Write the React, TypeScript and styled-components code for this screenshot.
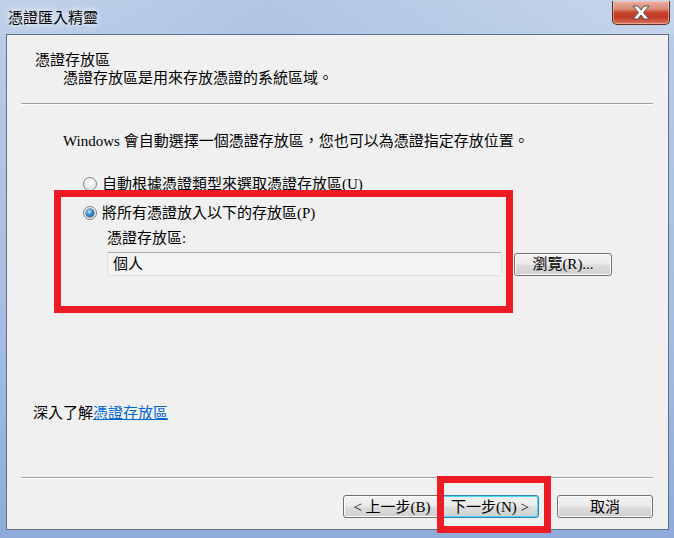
import React from "react";
import styled, { createGlobalStyle } from "styled-components";

const GlobalStyle = createGlobalStyle`
  html, body {
    margin: 0;
    padding: 0;
  }
  body {
    width: 674px;
    height: 538px;
    overflow: hidden;
    font-family: "Liberation Serif", "Noto Sans CJK TC", serif;
    font-size: 15px;
    color: #000;
  }
`;

const Window = styled.div`
  position: relative;
  width: 674px;
  height: 538px;
  display: flex;
  flex-direction: column;
  background: linear-gradient(180deg, #bccfe8 0%, #b2c7e4 20%, #a5bde0 60%, #8fabd9 100%);
`;

const TitleBar = styled.div`
  height: 34px;
  display: flex;
  align-items: flex-start;
  justify-content: space-between;
  background: linear-gradient(90deg, rgba(255, 255, 255, 0.05), rgba(120, 150, 200, 0.15) 40%, rgba(255, 255, 255, 0.15));
`;

const Title = styled.div`
  margin: 9px 0 0 8px;
  line-height: 18px;
  text-shadow: 0 0 6px rgba(255, 255, 255, 0.9), 0 0 10px rgba(255, 255, 255, 0.7);
`;

const CloseButton = styled.div`
  margin: 1px 4px 0 0;
  width: 58px;
  height: 24px;
  box-sizing: border-box;
  border: 1px solid #5e2a22;
  border-top: none;
  border-radius: 0 0 5px 5px;
  display: flex;
  align-items: center;
  justify-content: center;
  background: linear-gradient(180deg, #e9b2a3 0%, #d98a76 35%, #c8452d 50%, #c13a22 70%, #d9735c 100%);
  box-shadow: inset 0 0 0 1px rgba(255, 220, 210, 0.5);
`;

const Client = styled.div`
  flex: 1;
  margin: 0 5px 8px 6px;
  border: 1px solid #5f6e86;
  background: #f0f0f0;
  display: flex;
  flex-direction: column;
`;

const Header = styled.div`
  padding: 16px 0 0 28px;
`;

const HeaderTitle = styled.div`
  line-height: 18px;
`;

const HeaderSub = styled.div`
  line-height: 18px;
  margin-left: 28px;
`;

const Separator = styled.div<{ $top?: number }>`
  margin: ${(p) => p.$top ?? 0}px 15px 0 14px;
  border-top: 1px solid #a0a0a0;
  border-bottom: 1px solid #ffffff;
`;

const Body = styled.div`
  flex: 1;
  padding: 27px 0 0 56px;
  display: flex;
  flex-direction: column;
`;

const Line = styled.div<{ $top?: number; $indent?: number }>`
  line-height: 18px;
  margin-top: ${(p) => p.$top ?? 0}px;
  margin-left: ${(p) => p.$indent ?? 0}px;
`;

const RadioRow = styled.label<{ $top: number }>`
  display: flex;
  align-items: center;
  gap: 5px;
  margin: ${(p) => p.$top}px 0 0 20px;
  line-height: 18px;
`;

const RadioDot = styled.span<{ $checked?: boolean }>`
  position: relative;
  width: 14px;
  height: 14px;
  box-sizing: border-box;
  border-radius: 50%;
  border: 1px solid #7d8084;
  background: radial-gradient(circle at 50% 40%, #ffffff 0%, #ececec 45%, #c9cacc 100%);
  box-shadow: inset 0 0 0 1px rgba(255, 255, 255, 0.6);
  flex-shrink: 0;

  &::after {
    content: "";
    display: ${(p) => (p.$checked ? "block" : "none")};
    position: absolute;
    left: 2px;
    top: 2px;
    width: 8px;
    height: 8px;
    border-radius: 50%;
    background: radial-gradient(circle at 40% 35%, #c6ebff 0%, #3e93d6 40%, #0b3f78 100%);
    box-shadow: 0 0 0 0.5px #1c3c5e;
  }
`;

const FieldRow = styled.div`
  display: flex;
  align-items: center;
  gap: 12px;
  margin: 5px 0 0 44px;
`;

const Field = styled.div`
  width: 395px;
  height: 24px;
  box-sizing: border-box;
  border: 1px solid #dde1e7;
  border-top-color: #abadb3;
  border-radius: 2px;
  background: #f3f3f3;
  padding-left: 5px;
  line-height: 22px;
`;

const Button = styled.div<{ $width: number; $default?: boolean; $height?: number }>`
  width: ${(p) => p.$width}px;
  height: ${(p) => p.$height ?? 23}px;
  box-sizing: border-box;
  border: 1px solid ${(p) => (p.$default ? "#3c7fb1" : "#707070")};
  border-radius: 3px;
  display: flex;
  align-items: center;
  justify-content: center;
  line-height: 18px;
  background: linear-gradient(180deg, #f2f2f2 0%, #ebebeb 48%, #dddddd 52%, #cfcfcf 100%);
  box-shadow: inset 0 0 0 1px ${(p) => (p.$default ? "#48d8fb" : "#fcfcfc")};
`;

const LinkLine = styled.div`
  line-height: 18px;
  padding-left: 26px;
  margin-bottom: 55px;
`;

const Link = styled.span`
  color: #0066cc;
  text-decoration: underline;
`;

const Footer = styled.div`
  display: flex;
  justify-content: flex-end;
  padding: 16px 15px 11px 0;
`;

const ButtonPair = styled.div`
  display: flex;
  margin-right: 18px;
`;

const Highlight = styled.div<{ $x: number; $y: number; $w: number; $h: number }>`
  position: absolute;
  left: ${(p) => p.$x}px;
  top: ${(p) => p.$y}px;
  width: ${(p) => p.$w}px;
  height: ${(p) => p.$h}px;
  box-sizing: border-box;
  border: 7px solid #ed1c24;
  pointer-events: none;
`;

const CloseIcon = () => (
  <svg width="20" height="15" viewBox="0 0 20 15">
    <path
      d="M2 1 H7 L10 5 L13 1 H18 L12.5 7.5 L18 14 H13 L10 10 L7 14 H2 L7.5 7.5 Z"
      fill="#ffffff"
      stroke="#5a4a48"
      strokeWidth="1"
      strokeLinejoin="round"
    />
  </svg>
);

export default function App() {
  return (
    <>
      <GlobalStyle />
      <Window>
        <TitleBar>
          <Title>憑證匯入精靈</Title>
          <CloseButton>
            <CloseIcon />
          </CloseButton>
        </TitleBar>
        <Client>
          <Header>
            <HeaderTitle>憑證存放區</HeaderTitle>
            <HeaderSub>憑證存放區是用來存放憑證的系統區域。</HeaderSub>
          </Header>
          <Separator $top={16} />
          <Body>
            <Line>Windows 會自動選擇一個憑證存放區，您也可以為憑證指定存放位置。</Line>
            <RadioRow $top={25}>
              <RadioDot />
              <span>自動根據憑證類型來選取憑證存放區(U)</span>
            </RadioRow>
            <RadioRow $top={11}>
              <RadioDot $checked />
              <span>將所有憑證放入以下的存放區(P)</span>
            </RadioRow>
            <Line $top={7} $indent={44}>
              憑證存放區:
            </Line>
            <FieldRow>
              <Field>個人</Field>
              <Button $width={98} $height={23}>
                瀏覽(R)...
              </Button>
            </FieldRow>
          </Body>
          <LinkLine>
            深入了解<Link>憑證存放區</Link>
          </LinkLine>
          <Separator />
          <Footer>
            <ButtonPair>
              <Button $width={98}>&lt; 上一步(B)</Button>
              <Button $width={98} $default>
                下一步(N) &gt;
              </Button>
            </ButtonPair>
            <Button $width={96}>取消</Button>
          </Footer>
        </Client>
        <Highlight $x={54} $y={190} $w={459} $h={123} />
        <Highlight $x={437} $y={476} $w={114} $h={57} />
      </Window>
    </>
  );
}
